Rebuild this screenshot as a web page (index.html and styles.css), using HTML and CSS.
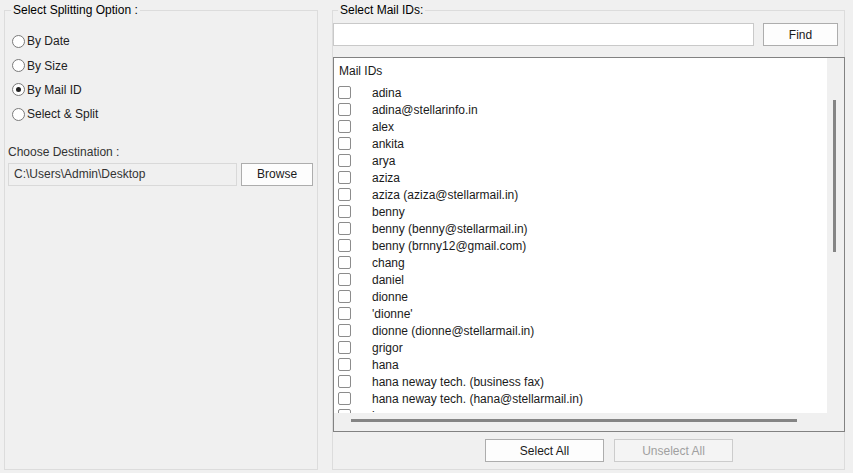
FILE: index.html
```html
<!DOCTYPE html>
<html lang="en">

<head>
    <meta charset="UTF-8">
    <title>Split by Mail ID</title>
    <link rel="stylesheet" href="styles.css">
</head>

<body>
    <fieldset class="group group-left">
        <legend>Select Splitting Option :</legend>
        <div class="options">
            <label class="option"><input type="radio" name="split" value="date">By Date</label>
            <label class="option"><input type="radio" name="split" value="size">By Size</label>
            <label class="option"><input type="radio" name="split" value="mail" checked>By Mail ID</label>
            <label class="option"><input type="radio" name="split" value="select">Select &amp; Split</label>
        </div>
        <div class="dest-label">Choose Destination :</div>
        <div class="dest-row">
            <input class="dest-input" type="text" value="C:\Users\Admin\Desktop" readonly>
            <button type="button" class="btn btn-browse">Browse</button>
        </div>
    </fieldset>

    <fieldset class="group group-right">
        <legend>Select Mail IDs:</legend>
        <div class="find-row">
            <input class="find-input" type="text">
            <button type="button" class="btn btn-find">Find</button>
        </div>

        <div class="listbox">
            <div class="list-area">
                <div class="list-head">Mail IDs</div>
                <ul class="list">
                    <li><input type="checkbox"><span>adina</span></li>
                    <li><input type="checkbox"><span>adina@stellarinfo.in</span></li>
                    <li><input type="checkbox"><span>alex</span></li>
                    <li><input type="checkbox"><span>ankita</span></li>
                    <li><input type="checkbox"><span>arya</span></li>
                    <li><input type="checkbox"><span>aziza</span></li>
                    <li><input type="checkbox"><span>aziza (aziza@stellarmail.in)</span></li>
                    <li><input type="checkbox"><span>benny</span></li>
                    <li><input type="checkbox"><span>benny (benny@stellarmail.in)</span></li>
                    <li><input type="checkbox"><span>benny (brnny12@gmail.com)</span></li>
                    <li><input type="checkbox"><span>chang</span></li>
                    <li><input type="checkbox"><span>daniel</span></li>
                    <li><input type="checkbox"><span>dionne</span></li>
                    <li><input type="checkbox"><span>'dionne'</span></li>
                    <li><input type="checkbox"><span>dionne (dionne@stellarmail.in)</span></li>
                    <li><input type="checkbox"><span>grigor</span></li>
                    <li><input type="checkbox"><span>hana</span></li>
                    <li><input type="checkbox"><span>hana neway tech. (business fax)</span></li>
                    <li><input type="checkbox"><span>hana neway tech. (hana@stellarmail.in)</span></li>
                    <li><input type="checkbox"><span>ivan</span></li>
                </ul>
            </div>
            <div class="vscroll"><div class="vthumb"></div></div>
            <div class="hscroll"><div class="hthumb"></div></div>
            <div class="corner"></div>
        </div>

        <div class="bottom-row">
            <button type="button" class="btn btn-wide">Select All</button>
            <button type="button" class="btn btn-wide" disabled>Unselect All</button>
        </div>
    </fieldset>
</body>

</html>
```

FILE: styles.css
```css
* {
    box-sizing: border-box;
}

body {
    margin: 0;
    padding: 2px 0 0 4px;
    height: 473px;
    overflow: hidden;
    display: flex;
    gap: 14px;
    background-color: #f0f0f0;
    font-family: "Liberation Sans", Arial, sans-serif;
    font-size: 12px;
    color: #1a1a1a;
}

.group {
    margin: 0;
    padding: 0;
    height: 468px;
    border: 1px solid #dcdcdc;
    border-radius: 0;
    min-width: 0;
}

.group legend {
    margin-left: 5px;
    padding: 0 2px;
    line-height: 16px;
    color: #000;
}

.group-left {
    width: 314px;
    padding: 0 4px 0 3px;
}

.group-left legend {
    margin-left: 3px;
}

.group-right {
    width: 513px;
    padding: 0 1px 0 0;
}

/* left side */

.options {
    padding-top: 11px;
    display: flex;
    flex-direction: column;
}

.option {
    display: flex;
    align-items: center;
    height: 24.4px;
    padding-left: 4px;
    line-height: 16px;
    color: #222;
}

.option input {
    appearance: none;
    margin: 0 2px 0 0;
    width: 13px;
    height: 13px;
    border: 1px solid #7a7a7a;
    border-radius: 50%;
    background-color: #fff;
    display: grid;
    place-items: center;
}

.option input:checked::after {
    content: "";
    width: 5px;
    height: 5px;
    border-radius: 50%;
    background-color: #222;
}

.dest-label {
    margin-top: 17px;
    line-height: 16px;
    color: #333;
}

.dest-row {
    margin-top: 3px;
    display: flex;
    gap: 4px;
}

.dest-input {
    width: 230px;
    height: 23px;
    margin: 0;
    padding: 0 5px;
    border: 1px solid #d9d9d9;
    background-color: #f0f0f0;
    font: inherit;
    color: #333;
    outline: none;
}

.btn {
    height: 23px;
    margin: 0;
    padding: 0;
    border: 1px solid #adadad;
    background-color: #fdfdfd;
    font: inherit;
    color: #1a1a1a;
}

.btn:disabled {
    border-color: #cccccc;
    color: #a0a0a0;
    background-color: #f4f4f4;
}

.btn-browse {
    width: 72px;
}

/* right side */

.find-row {
    margin-top: 5px;
    display: flex;
    gap: 9px;
    padding-right: 5px;
}

.find-input {
    width: 421px;
    height: 23px;
    margin: 0;
    border: 1px solid #c9c9c9;
    background-color: #fff;
    font: inherit;
    outline: none;
}

.btn-find {
    width: 75px;
}

.listbox {
    margin-top: 11px;
    width: 512px;
    height: 375px;
    border: 1px solid #828282;
    display: grid;
    grid-template-columns: 1fr 17px;
    grid-template-rows: 1fr 18px;
    background-color: #f0f0f0;
}

.list-area {
    background-color: #fff;
    overflow: hidden;
}

.list-head {
    height: 26px;
    padding-left: 5px;
    line-height: 26px;
    color: #1a1a1a;
}

.list {
    margin: 0;
    padding: 0;
    list-style: none;
}

.list li {
    height: 17px;
    display: flex;
    align-items: center;
    padding-left: 4px;
}

.list input {
    appearance: none;
    margin: 0 21px 0 0;
    width: 13px;
    height: 13px;
    border: 1px solid #8c8c8c;
    border-radius: 2px;
    background-color: #fff;
}

.vscroll {
    padding: 42px 0 0 6px;
}

.vthumb {
    width: 3px;
    height: 152px;
    background-color: #858585;
}

.hscroll {
    padding: 6px 0 0 17px;
}

.hthumb {
    width: 446px;
    height: 3px;
    background-color: #858585;
}

.bottom-row {
    margin-top: 7px;
    padding-left: 152px;
    display: flex;
    gap: 10px;
}

.btn-wide {
    width: 119px;
}
```
